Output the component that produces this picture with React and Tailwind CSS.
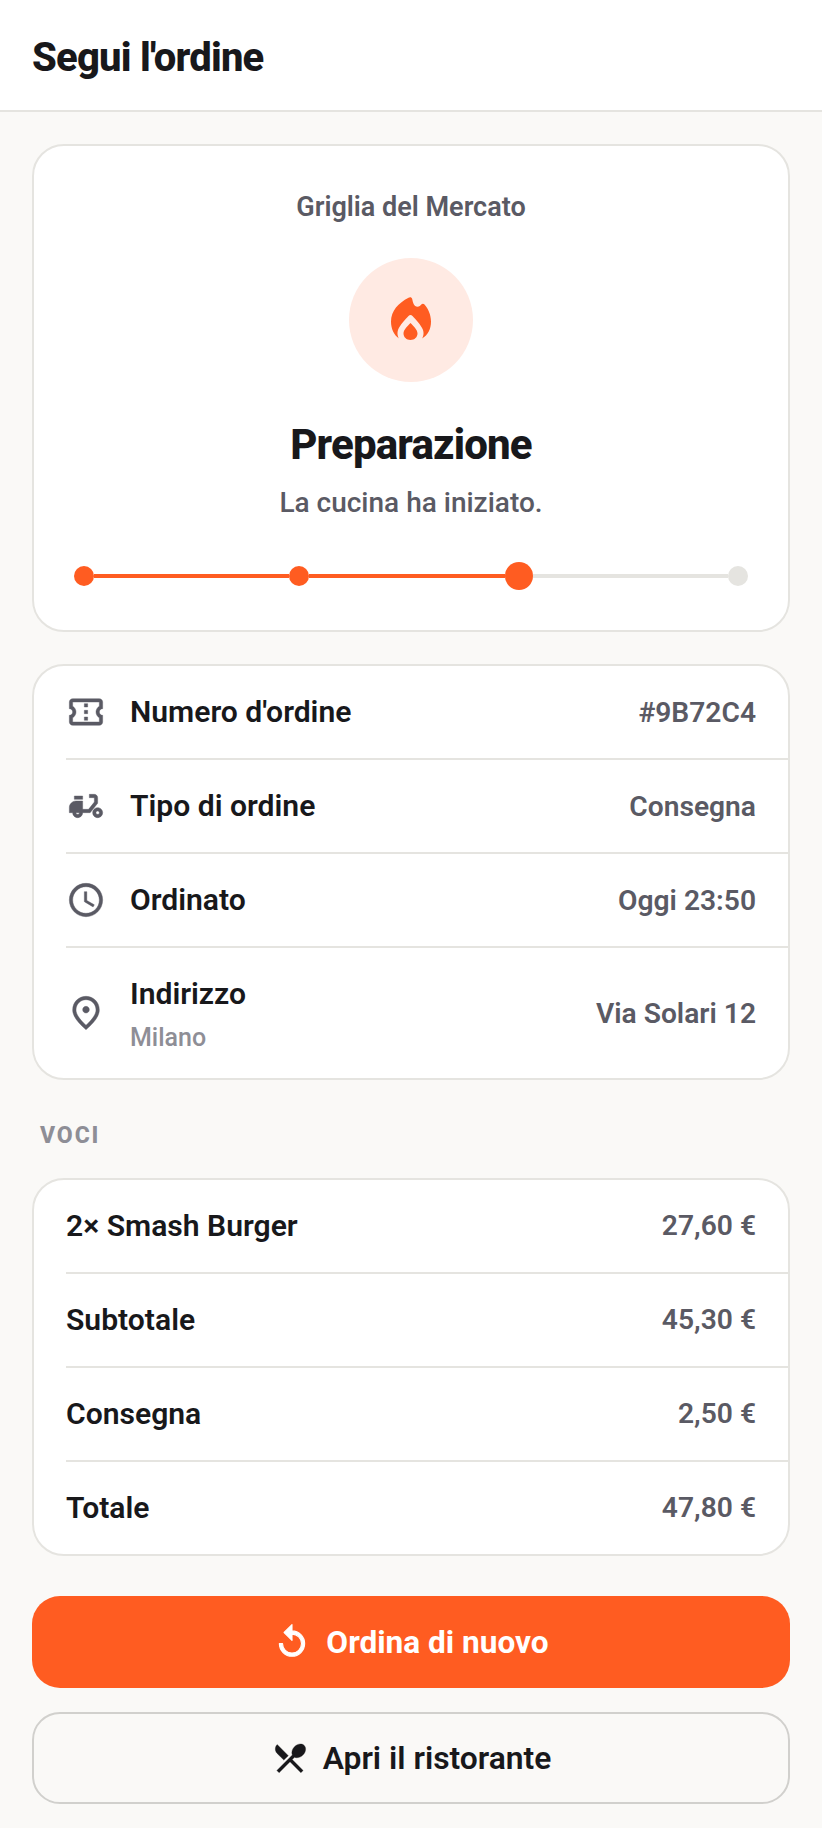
const P = {
  ticket: "M22 10V6c0-1.11-.9-2-2-2H4c-1.1 0-1.99.89-1.99 2v4c1.1 0 1.99.9 1.99 2s-.89 2-2 2v4c0 1.1.9 2 2 2h16c1.1 0 2-.9 2-2v-4c-1.1 0-2-.9-2-2s.9-2 2-2zm-2-1.46c-1.19.69-2 1.99-2 3.46s.81 2.77 2 3.46V18H4v-2.54c1.19-.69 2-1.99 2-3.46 0-1.48-.8-2.77-1.99-3.46L4 6h16v2.54zM11 15h2v2h-2zm0-4h2v2h-2zm0-4h2v2h-2z",
  moped: "M19 7c0-1.1-.9-2-2-2h-3v2h3v2.65L13.52 14H10V9H6c-2.21 0-4 1.79-4 4v3h2c0 1.66 1.34 3 3 3s3-1.34 3-3h4.48L19 10.35V7zM7 17c-.55 0-1-.45-1-1h2c0 .55-.45 1-1 1zM5 6h5v2H5zM19 13c-1.66 0-3 1.34-3 3s1.34 3 3 3 3-1.34 3-3-1.34-3-3-3zm0 4c-.55 0-1-.45-1-1s.45-1 1-1 1 .45 1 1-.45 1-1 1z",
  clock: "M11.99 2C6.47 2 2 6.48 2 12s4.47 10 9.99 10C17.52 22 22 17.52 22 12S17.52 2 11.99 2zM12 20c-4.42 0-8-3.58-8-8s3.58-8 8-8 8 3.58 8 8-3.58 8-8 8zm.5-13H11v6l5.25 3.15.75-1.23-4.5-2.67z",
  pin: "M12 12c-1.1 0-2-.9-2-2s.9-2 2-2 2 .9 2 2-.9 2-2 2zm6-1.8C18 6.57 15.35 4 12 4s-6 2.57-6 6.2c0 2.34 1.95 5.44 6 9.14 4.05-3.7 6-6.8 6-9.14zM12 2c4.2 0 8 3.22 8 8.2 0 3.32-2.67 7.25-8 11.8-5.33-4.55-8-8.48-8-11.8C4 5.22 7.8 2 12 2z",
  replay: "M12 5V1L7 6l5 5V7c3.31 0 6 2.69 6 6s-2.69 6-6 6-6-2.69-6-6H4c0 4.42 3.58 8 8 8s8-3.58 8-8-3.58-8-8-8z",
  menu: "m8.1 13.34 2.83-2.83L3.91 3.5c-1.56 1.56-1.56 4.09 0 5.66l4.19 4.18zm6.78-1.81c1.53.71 3.68.21 5.27-1.38 1.91-1.91 2.28-4.65.81-6.12-1.46-1.46-4.2-1.1-6.12.81-1.59 1.59-2.09 3.74-1.38 5.27L3.7 19.87l1.41 1.41L12 14.41l6.88 6.88 1.41-1.41L13.41 13l1.47-1.47z",
};

function Icon({ d, className, weight = 0.25 }) {
  return (
    <svg viewBox="0 0 24 24" fill="currentColor" stroke="currentColor" strokeWidth={weight} strokeLinejoin="round" className={className}>
      <path d={d} />
    </svg>
  );
}

function Flame() {
  return (
    <svg viewBox="0 0 40 43" className="w-[40px] h-[43px] mb-[3px] text-[#ff5c21]" fill="currentColor">
      <path d="M17.5 .8c1.400-1.100 3.300-.6 3.700 1.200.7 3.500 1.800 7.800 5.300 7.800 1.800 0 3-1.300 3.800-2.200.9-1 2.300-1 3.200 0C37.300 12 40 18 40 24.500c0 7.500-3 13.500-9 17 1.500-2 2-5.500 1-8.500-2-5-7-10.500-10.500-14-1.200-1.200-2.800-1.200-4 0C14 22.500 9 28 7 33c-1 3-.5 6.500 1 8.500C3 38 0 32 0 24.500 0 14 7.500 6 17.500 .8z" />
      <path d="M19.500 26c2.500 2.800 7 6.500 7 10.500 0 3.600-3 6.500-7 6.500s-7-2.900-7-6.500c0-4 4.500-7.700 7-10.500z" />
    </svg>
  );
}

function Row({ icon, label, sub, value, last }) {
  return (
    <div className={`flex items-center ml-8 pr-8 ${sub ? "h-[130px]" : "h-[94px]"} ${last ? "" : "border-b-2 border-[#e5e4e0]"}`}>
      <Icon d={icon} className="w-[40px] h-[40px] text-[#5a5a64] shrink-0" />
      <div className={`ml-[24px] flex flex-col ${sub ? "pt-[3px]" : "pb-[1px]"}`}>
        <span className="text-[30.1px] leading-[38px] font-semibold text-[#18181b]">{label}</span>
        {sub && <span className="text-[25px] leading-[32px] mt-[9px] font-medium text-[#8e8e96]">{sub}</span>}
      </div>
      <span className="ml-auto pt-[2px] text-[28.2px] font-semibold text-[#5a5a64]">{value}</span>
    </div>
  );
}

function Item({ label, value, last }) {
  return (
    <div className={`flex items-center justify-between ml-8 pr-8 ${last ? "h-[92px]" : "h-[94px] border-b-2 border-[#e5e4e0]"}`}>
      <span className="pb-[1px] text-[30.1px] font-semibold text-[#18181b]">{label}</span>
      <span className="text-[28.2px] font-semibold text-[#5a5a64]">{value}</span>
    </div>
  );
}

export default function App() {
  return (
    <div className="min-h-[1828px] bg-[#faf9f7]" style={{ fontFamily: "Roboto, sans-serif" }}>
      <header className="h-[112px] pt-[6px] bg-white border-b-2 border-[#e5e4e0] flex items-center px-8">
        <h1 className="text-[40px] font-extrabold tracking-[-0.8px] text-[#18181b]">Segui l'ordine</h1>
      </header>
      <main className="px-8 pt-8 flex flex-col">
        <section className="h-[488px] bg-white border-2 border-[#e5e4e0] rounded-[32px] flex flex-col items-center pt-[44px] px-[40px]">
          <div className="text-[27px] leading-[34px] font-semibold text-[#5a5a64]">Griglia del Mercato</div>
          <div className="mt-[34px] w-[124px] h-[124px] rounded-full bg-[#ffeae3] flex items-center justify-center">
            <Flame />
          </div>
          <div className="mt-[36px] text-[42px] leading-[54px] font-extrabold tracking-[-0.84px] text-[#18181b]">Preparazione</div>
          <div className="mt-[13px] text-[28px] leading-[36px] font-medium text-[#5a5a64]">La cucina ha iniziato.</div>
          <div className="mt-[41px] w-full flex items-center">
            <span className="w-5 h-5 rounded-full bg-[#ff5c21] shrink-0" />
            <span className="flex-1 h-1 bg-[#ff5c21]" />
            <span className="w-5 h-5 rounded-full bg-[#ff5c21] shrink-0" />
            <span className="flex-1 h-1 bg-[#ff5c21]" />
            <span className="w-7 h-7 rounded-full bg-[#ff5c21] shrink-0" />
            <span className="flex-1 h-1 bg-[#e5e4e0]" />
            <span className="w-5 h-5 rounded-full bg-[#e5e4e0] shrink-0" />
          </div>
        </section>

        <section className="mt-8 bg-white border-2 border-[#e5e4e0] rounded-[32px] overflow-hidden">
          <Row icon={P.ticket} label="Numero d'ordine" value="#9B72C4" />
          <Row icon={P.moped} label="Tipo di ordine" value="Consegna" />
          <Row icon={P.clock} label="Ordinato" value="Oggi 23:50" />
          <Row icon={P.pin} label="Indirizzo" sub="Milano" value="Via Solari 12" last />
        </section>

        <div className="mt-[42px] ml-2 text-[23px] leading-[28px] font-extrabold tracking-[1.9px] text-[#8e8e96]">VOCI</div>

        <section className="mt-[28px] bg-white border-2 border-[#e5e4e0] rounded-[32px] overflow-hidden">
          <Item label="2× Smash Burger" value="27,60 €" />
          <Item label="Subtotale" value="45,30 €" />
          <Item label="Consegna" value="2,50 €" />
          <Item label="Totale" value="47,80 €" last />
        </section>

        <button className="mt-[40px] h-[92px] rounded-[28px] bg-[#ff5c21] text-white flex items-center justify-center gap-[15px]">
          <Icon d={P.replay} weight={0.7} className="w-[38px] h-[38px]" />
          <span className="pt-[1px] text-[31.6px] font-bold">Ordina di nuovo</span>
        </button>
        <button className="mt-[24px] h-[92px] rounded-[28px] border-2 border-[#d1d0cd] text-[#18181b] flex items-center justify-center gap-[14px]">
          <Icon d={P.menu} weight={0.2} className="w-[38px] h-[38px]" />
          <span className="pt-[1px] text-[31.8px] font-semibold">Apri il ristorante</span>
        </button>
      </main>
    </div>
  );
}
